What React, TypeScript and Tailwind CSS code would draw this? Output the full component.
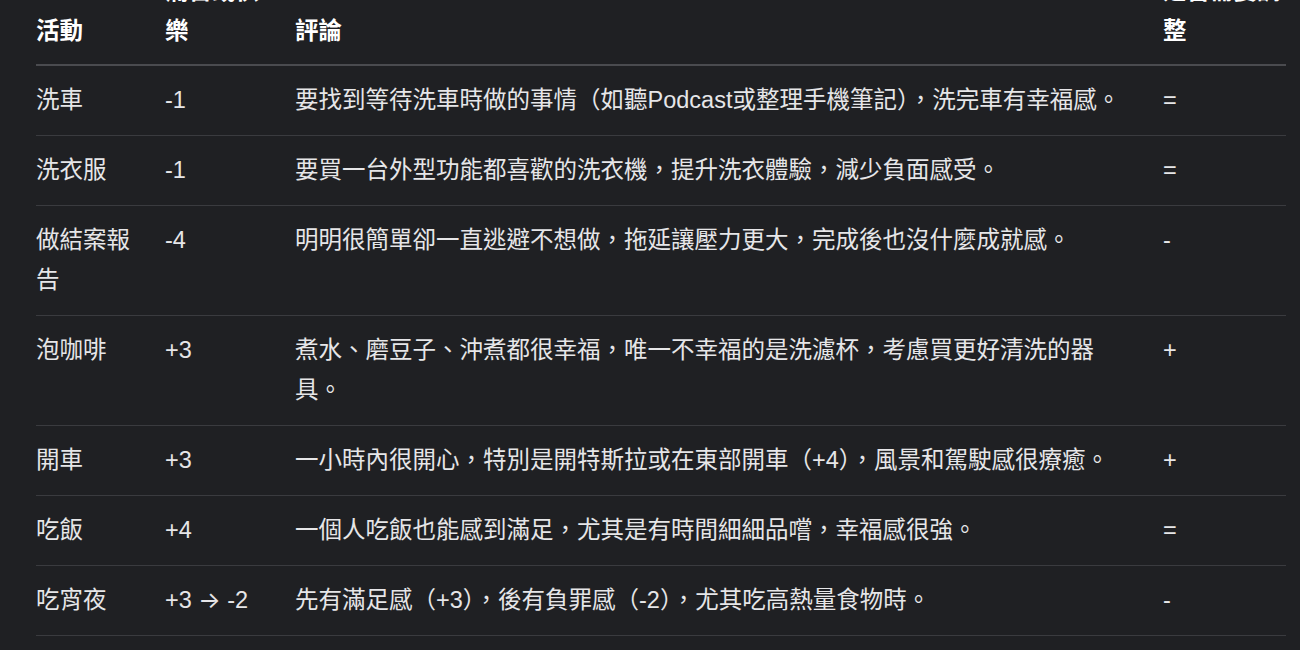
import React from "react";

type Row = { a: string; b: React.ReactNode; c: string; d: string };

const rows: Row[] = [
  { a: "洗車", b: "-1", c: "要找到等待洗車時做的事情（如聽Podcast或整理手機筆記），洗完車有幸福感。", d: "=" },
  { a: "洗衣服", b: "-1", c: "要買一台外型功能都喜歡的洗衣機，提升洗衣體驗，減少負面感受。", d: "=" },
  { a: "做結案報告", b: "-4", c: "明明很簡單卻一直逃避不想做，拖延讓壓力更大，完成後也沒什麼成就感。", d: "-" },
  { a: "泡咖啡", b: "+3", c: "煮水、磨豆子、沖煮都很幸福，唯一不幸福的是洗濾杯，考慮買更好清洗的器具。", d: "+" },
  { a: "開車", b: "+3", c: "一小時內很開心，特別是開特斯拉或在東部開車（+4），風景和駕駛感很療癒。", d: "+" },
  { a: "吃飯", b: "+4", c: "一個人吃飯也能感到滿足，尤其是有時間細細品嚐，幸福感很強。", d: "=" },
  {
    a: "吃宵夜",
    b: (
      <>
        +3 <span style={{ fontFamily: "Inter, sans-serif" }}>→</span> -2
      </>
    ),
    c: "先有滿足感（+3），後有負罪感（-2），尤其吃高熱量食物時。",
    d: "-",
  },
];

const headers = ["活動", "痛苦或快樂", "評論", "是否需要調整"];

export default function App() {
  return (
    <div
      className="w-[1300px] h-[650px] overflow-hidden bg-[#1f2023] text-[#e6e6e8]"
      style={{ fontFamily: '"Liberation Sans", "Noto Sans CJK TC", sans-serif' }}
    >
      <div className="ml-[36px] mt-[-29px] w-[1250px] grid grid-cols-[129px_130px_868px_123px] text-[23.5px]">
        {headers.map((h, i) => (
          <div
            key={h}
            className={`font-bold text-white leading-[40px] pb-[13px] border-b-2 border-[#4a4b4f] flex items-end ${
              i === 3 ? "pr-0" : i === 2 ? "pr-[24px]" : "pr-[16px]"
            }`}
          >
            <span>{h}</span>
          </div>
        ))}
        {rows.map((r, ri) =>
          [r.a, r.b, r.c, r.d].map((t, i) => (
            <div
              key={`${ri}-${i}`}
              className={`leading-[40px] pt-[14px] pb-[15px] border-b border-[#3a3b3f] ${
                i === 3 ? "pr-0" : i === 2 ? "pr-[24px]" : "pr-[16px]"
              }`}
            >
              {t}
            </div>
          ))
        )}
      </div>
    </div>
  );
}
